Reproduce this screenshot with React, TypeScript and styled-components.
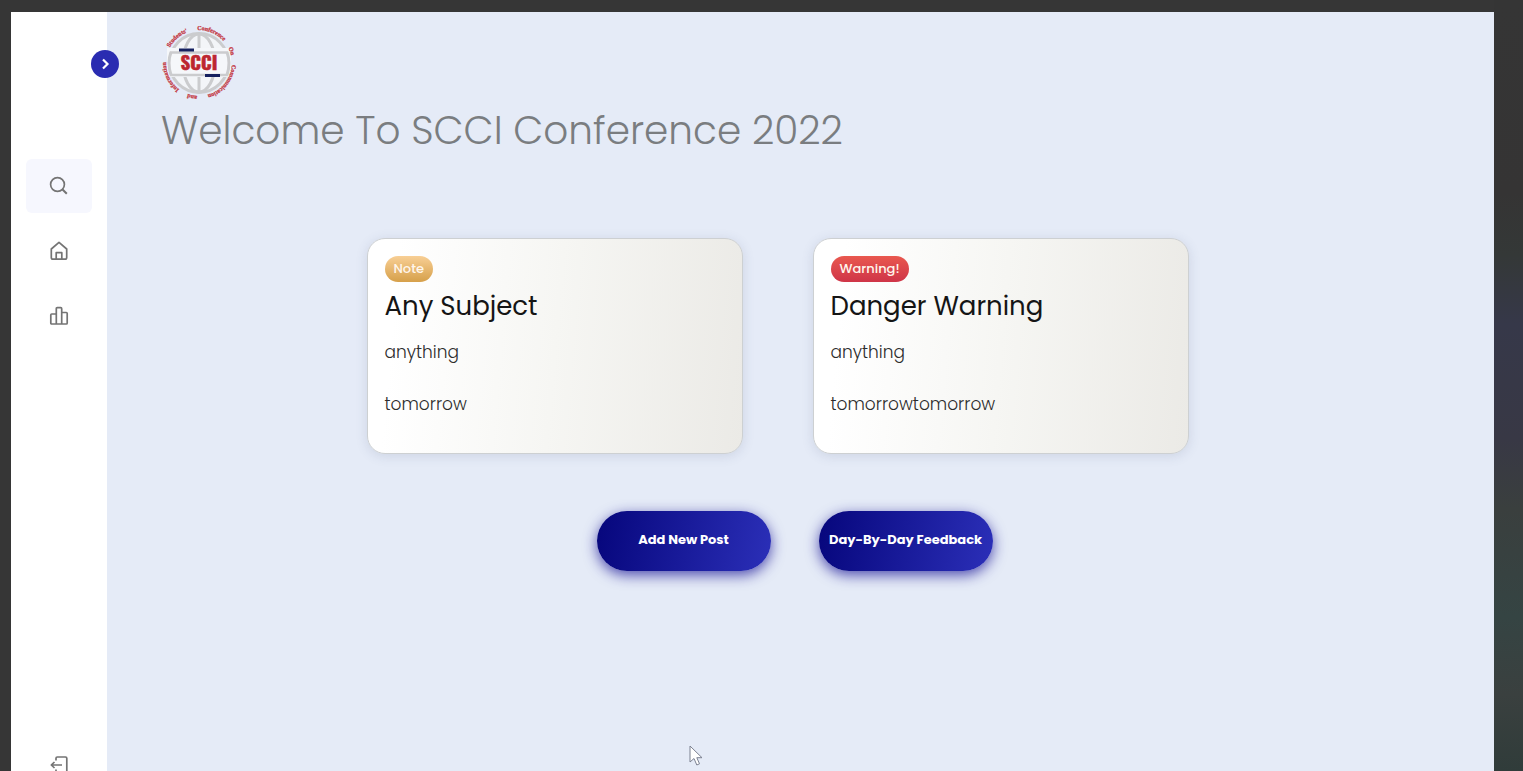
import React from 'react';
import styled, { createGlobalStyle, css } from 'styled-components';

const GlobalStyle = createGlobalStyle`
  * { box-sizing: border-box; }
  body {
    margin: 0;
    font-family: Poppins, Inter, "Liberation Sans", sans-serif;
  }
  h1, h2, p { margin: 0; font-weight: inherit; }
  button { font-family: inherit; border: 0; cursor: pointer; }
`;

const Desktop = styled.div`
  height: 100vh;
  overflow: hidden;
  padding: 12px 29px 0 11px;
  background:
    linear-gradient(#353535, #353434 25%, #343837 33%, #363849 42%, #383845 57%, #3a3f3e 66%, #354443 80%, #3a403f 90%, #303c3a)
      right / 29px 100% no-repeat,
    #363636;
`;

const Page = styled.div`
  display: flex;
  min-height: 100vh;
  background: #e5ebf7;
`;

const Sidebar = styled.aside`
  position: relative;
  flex: 0 0 96px;
  display: flex;
  flex-direction: column;
  align-items: center;
  justify-content: space-between;
  padding-top: 147px;
  background: #fff;
`;

const Toggle = styled.button`
  position: absolute;
  top: 38px;
  right: -12px;
  width: 28px;
  height: 28px;
  padding: 0;
  display: grid;
  place-items: center;
  border-radius: 50%;
  background: #2a2cb1;
  color: #fff;
`;

const Nav = styled.nav`
  display: flex;
  flex-direction: column;
  gap: 11px;
`;

const NavButton = styled.button<{ $active?: boolean; $short?: boolean }>`
  display: grid;
  place-items: center;
  width: 66px;
  height: ${(p) => (p.$short ? '38px' : '54px')};
  padding: 0;
  border-radius: 6px;
  background: ${(p) => (p.$active ? '#f6f7fe' : 'transparent')};
  color: #747474;
`;

const Main = styled.main`
  flex: 1;
  padding: 13px 66px 0 54px;
`;

const Heading = styled.h1`
  margin-top: 3px;
  font-size: 39px;
  line-height: 54px;
  font-weight: 300;
  color: #7a7d80;
`;

const Cards = styled.section`
  display: flex;
  justify-content: center;
  gap: 70px;
  margin-top: 80px;
  padding-right: 34px;
`;

const Card = styled.article`
  flex: 0 1 376px;
  min-height: 216px;
  padding: 17px;
  border: 1px solid #cdd0d2;
  border-radius: 18px;
  background: linear-gradient(95deg, #fff 8%, #f6f6f3 50%, #ebeae6);
  box-shadow: 0 2px 12px rgba(70, 80, 120, 0.15);
`;

const tones = {
  note: css`background: linear-gradient(#f8cf95, #d6a04a);`,
  warning: css`background: linear-gradient(#e9584f, #cf3548);`,
};

const Badge = styled.span<{ $tone: keyof typeof tones }>`
  display: block;
  width: fit-content;
  padding: 0 9px;
  border-radius: 13px;
  font-size: 13px;
  line-height: 26px;
  font-weight: 500;
  color: #fff6ec;
  ${(p) => tones[p.$tone]}
`;

const CardTitle = styled.h2`
  margin-top: 4px;
  font-size: 26px;
  line-height: 40px;
  font-weight: 400;
  color: #151515;
`;

const CardText = styled.p`
  margin-top: 12px;
  font-size: 17px;
  line-height: 28px;
  font-weight: 300;
  color: #2c2c2c;

  & + & { margin-top: 24px; }
`;

const Actions = styled.div`
  display: flex;
  justify-content: center;
  gap: 48px;
  margin-top: 57px;
`;

const ActionButton = styled.button`
  width: 174px;
  height: 60px;
  padding: 0 0 2px;
  border-radius: 30px;
  background: linear-gradient(100deg, #06067c, #2b2fb8);
  box-shadow: 0 4px 14px rgba(24, 20, 150, 0.75);
  font-size: 13px;
  font-weight: 700;
  white-space: nowrap;
  color: #fff;
`;

const LogoMark = styled.svg`
  display: block;
  width: 76px;
  height: 76px;
  overflow: visible;
`;

const Pointer = styled.svg`
  position: fixed;
  left: 689px;
  top: 745px;
  width: 14px;
  height: 22px;
`;

const ringWords: [string, number][] = [
  ["Students'", -62],
  ['Conference', -3],
  ['On', 63],
  ['Communication', 93],
  ['and', 183],
  ['Information', 217],
];

const Logo = () => (
  <LogoMark viewBox="-38 -38 76 76" role="img" aria-label="SCCI">
    <defs>
      <path id="ring" d="M0-33A33 33 0 0 1 0 33A33 33 0 0 1 0-33" />
    </defs>
    <circle r="30" fill="#f3f5f8" />
    <g fill="none" stroke="#cbccce" strokeWidth="3">
      <circle r="29.4" />
      <ellipse rx="16" ry="29" />
      <path d="M0-29V29" />
    </g>
    <path d="M-32-15H32V14H-32Z" fill="#f5f7fa" />
    <path d="M-29-10.500H29M-29 12H29" stroke="#cbccce" strokeWidth="2.4" />
    <path d="M-28-11Q-32 0-28 12M28-11Q32 0 28 12" fill="none" stroke="#cbccce" strokeWidth="3" />
    <path d="M-20-13H-5M6 12.500H21" stroke="#15205f" strokeWidth="2.800" />
    <text y="7" textAnchor="middle" fontFamily="Oswald, 'Roboto Condensed', 'Liberation Sans Narrow', 'Liberation Sans', sans-serif" fontSize="19" fontWeight="700" fill="#bd2630" stroke="#bd2630" strokeWidth="0.500">SCCI</text>
    <g fontFamily="'Liberation Serif', serif" fontSize="6" fontWeight="700" fill="#c43a45" stroke="#c43a45" strokeWidth="0.300">
      {ringWords.map(([word, angle]) => (
        <text key={word} transform={`rotate(${angle})`}>
          <textPath href="#ring">{word}</textPath>
        </text>
      ))}
    </g>
  </LogoMark>
);

const Icon = ({ children }: { children: React.ReactNode }) => (
  <svg width="22" height="22" viewBox="0 0 22 22" fill="none" stroke="currentColor" strokeWidth="1.700" strokeLinejoin="round" aria-hidden="true">
    {children}
  </svg>
);

const posts = [
  { tone: 'note' as const, label: 'Note', title: 'Any Subject', body: 'anything', when: 'tomorrow' },
  { tone: 'warning' as const, label: 'Warning!', title: 'Danger Warning', body: 'anything', when: 'tomorrowtomorrow' },
];

export default function App() {
  return (
    <Desktop>
      <GlobalStyle />
      <Page>
        <Sidebar>
          <Toggle aria-label="Open menu">
            <svg width="12" height="12" viewBox="0 0 12 12" fill="none" stroke="currentColor" strokeWidth="2.200" aria-hidden="true">
              <path d="M4 1.500L8.500 6L4 10.500" />
            </svg>
          </Toggle>
          <Nav>
            <NavButton $active aria-label="Search">
              <Icon>
                <circle cx="9.500" cy="9.500" r="6.900" />
                <path d="M14.300 14.300L18.800 18.800" strokeWidth="2" />
              </Icon>
            </NavButton>
            <NavButton aria-label="Home">
              <Icon>
                <path d="M11 2.300L3.300 9V17.500Q3.300 19.200 5 19.200H17Q18.700 19.200 18.700 17.500V9Z" />
                <path d="M8.200 19V12.700H13.800V19" />
              </Icon>
            </NavButton>
            <NavButton aria-label="Statistics">
              <Icon>
                <path d="M8.300 19H3.700Q2.800 19 2.800 18V10Q2.800 9 3.700 9H8.300M8.300 19V3.700Q8.300 2.700 9.300 2.700H12.700Q13.700 2.700 13.700 3.700V19ZM13.700 7.500H18.300Q19.200 7.500 19.200 8.500V18Q19.200 19 18.300 19H13.700" />
              </Icon>
            </NavButton>
          </Nav>
          <NavButton $short aria-label="Log out">
            <Icon>
              <path d="M8 7.500V5.300Q8 4 9.300 4H17.500Q18.800 4 18.800 5.300V18.700Q18.800 20 17.500 20H9.300Q8 20 8 18.700V16.500" />
              <path d="M14 12H3.500M6.500 9L3.300 12L6.500 15" />
            </Icon>
          </NavButton>
        </Sidebar>
        <Main>
          <Logo />
          <Heading>Welcome To SCCI Conference 2022</Heading>
          <Cards>
            {posts.map((post) => (
              <Card key={post.title}>
                <Badge $tone={post.tone}>{post.label}</Badge>
                <CardTitle>{post.title}</CardTitle>
                <CardText>{post.body}</CardText>
                <CardText>{post.when}</CardText>
              </Card>
            ))}
          </Cards>
          <Actions>
            <ActionButton>Add New Post</ActionButton>
            <ActionButton>Day-By-Day Feedback</ActionButton>
          </Actions>
        </Main>
      </Page>
      <Pointer viewBox="0 0 14 22" aria-hidden="true">
        <path d="M1 1V17L5 13.500L7.800 20L10.500 18.800L7.800 12.700H13Z" fill="#fff" stroke="#7b8090" strokeWidth="1" />
      </Pointer>
    </Desktop>
  );
}
